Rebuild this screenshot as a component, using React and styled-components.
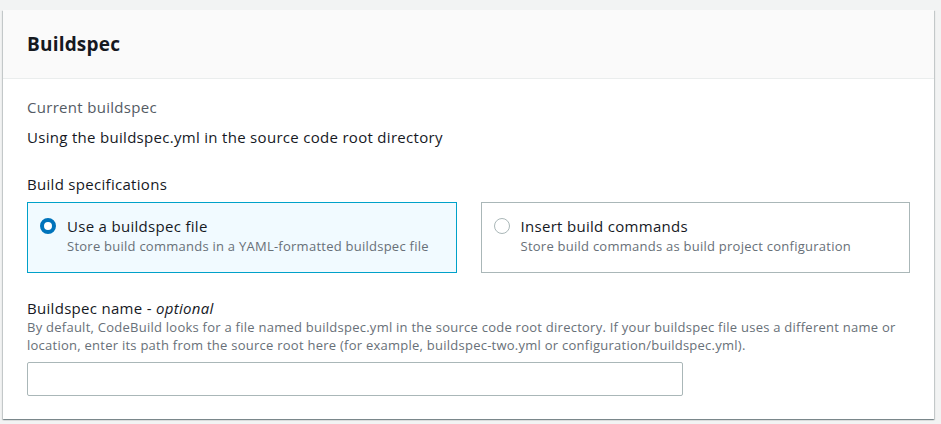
import React, { useState } from 'react';
import styled, { createGlobalStyle } from 'styled-components';

const GlobalStyle = createGlobalStyle`
  body {
    margin: 0;
    background: #f2f3f3;
    font-family: "Open Sans", "Liberation Sans", Arial, sans-serif;
    color: #16191f;
  }
`;

const Page = styled.div`
  padding: 10px 7px 6px 3px;
`;

const Card = styled.section`
  background: #fff;
  box-shadow: 0 1px 1px 0 rgba(0, 28, 36, 0.3), 1px 1px 1px 0 rgba(0, 28, 36, 0.15),
    -1px 1px 1px 0 rgba(0, 28, 36, 0.15);
`;

const Header = styled.header`
  height: 68px;
  display: flex;
  align-items: center;
  padding: 0 24px;
  background: #fafafa;
  border-bottom: 1px solid #eaeded;
`;

const Title = styled.h2`
  margin: 0;
  font-size: 19px;
  font-weight: 700;
  line-height: 22px;
  letter-spacing: 0.2px;
`;

const Body = styled.div`
  padding: 18px 24px 23px;
`;

const Label = styled.div`
  font-size: 15px;
  line-height: 20px;
  letter-spacing: 0.3px;
  color: ${({ muted }) => (muted ? '#545b64' : '#16191f')};
  margin-top: ${({ gap }) => gap || 0}px;

  em {
    font-style: italic;
  }
`;

const Tiles = styled.div`
  display: grid;
  grid-template-columns: 1fr 1fr;
  gap: 24px;
  margin-top: 8px;
`;

const Tile = styled.label`
  display: flex;
  gap: 11px;
  padding: 12px 12px 17px;
  border: 1px solid ${({ active }) => (active ? '#00a1c9' : '#aab7b8')};
  background: ${({ active }) => (active ? '#f1faff' : '#fff')};
  cursor: pointer;
`;

const Radio = styled.span`
  flex: none;
  box-sizing: border-box;
  width: 16px;
  height: 16px;
  margin-top: 3px;
  border-radius: 50%;
  background: #fff;
  border: ${({ checked }) => (checked ? '4px solid #0073bb' : '1.5px solid #aab7b8')};
`;

const TileText = styled.div`
  display: flex;
  flex-direction: column;
`;

const TileTitle = styled.span`
  font-size: 15px;
  line-height: 22px;
  letter-spacing: 0.3px;
`;

const Hint = styled.span`
  font-size: 13px;
  line-height: 18px;
  letter-spacing: 0.25px;
  color: #687078;
`;

const Description = styled.div`
  font-size: 13px;
  line-height: 18px;
  letter-spacing: 0.25px;
  color: #687078;
`;

const Input = styled.input`
  display: block;
  box-sizing: border-box;
  width: 656px;
  height: 34px;
  margin-top: 8px;
  padding: 4px 10px;
  border: 1px solid #aab7b8;
  border-radius: 2px;
  font: inherit;
  font-size: 14px;
  outline: none;
`;

const options = [
  {
    id: 'file',
    title: 'Use a buildspec file',
    hint: 'Store build commands in a YAML-formatted buildspec file',
  },
  {
    id: 'insert',
    title: 'Insert build commands',
    hint: 'Store build commands as build project configuration',
  },
];

export default function App() {
  const [spec, setSpec] = useState('file');

  return (
    <>
      <GlobalStyle />
      <Page>
        <Card>
          <Header>
            <Title>Buildspec</Title>
          </Header>
          <Body>
            <Label muted>Current buildspec</Label>
            <Label gap={10}>Using the buildspec.yml in the source code root directory</Label>

            <Label gap={27}>Build specifications</Label>
            <Tiles>
              {options.map((opt) => (
                <Tile key={opt.id} active={spec === opt.id} onClick={() => setSpec(opt.id)}>
                  <Radio checked={spec === opt.id} />
                  <TileText>
                    <TileTitle>{opt.title}</TileTitle>
                    <Hint>{opt.hint}</Hint>
                  </TileText>
                </Tile>
              ))}
            </Tiles>

            <Label gap={25}>
              Buildspec name - <em>optional</em>
            </Label>
            <Description>
              By default, CodeBuild looks for a file named buildspec.yml in the source code root
              directory. If your buildspec file uses a different name or location, enter its path
              from the source root here (for example, buildspec-two.yml or
              configuration/buildspec.yml).
            </Description>
            <Input type="text" />
          </Body>
        </Card>
      </Page>
    </>
  );
}
